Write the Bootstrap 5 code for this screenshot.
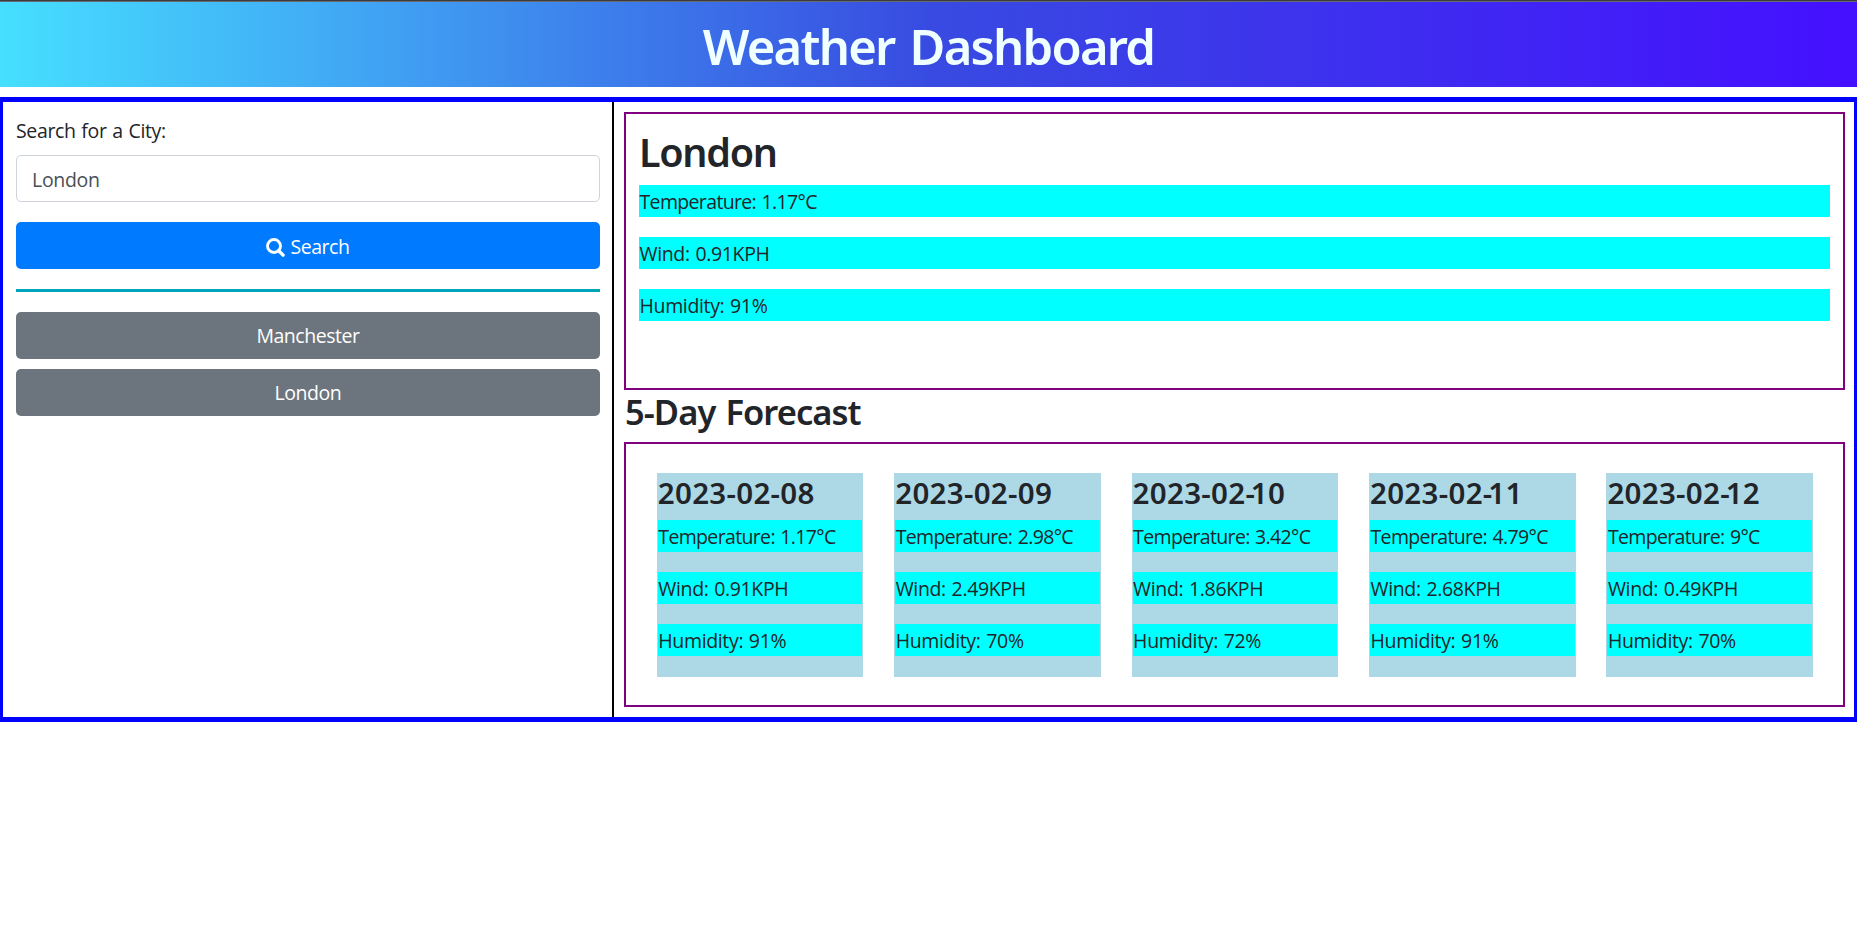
<!DOCTYPE html>
<html lang="en">
<head>
<meta charset="utf-8">
<meta name="viewport" content="width=device-width, initial-scale=1">
<title>Weather Dashboard</title>
<link rel="stylesheet" href="https://cdn.jsdelivr.net/npm/bootstrap@5.3.0/dist/css/bootstrap.min.css">
<style>
  body { font: 400 19.5px/32px "Open Sans", "Noto Sans", sans-serif; letter-spacing: -.35px; word-spacing: 1px; color: #212529; }
  h1, h2, h3, h4 { font-family: "Noto Sans", sans-serif; font-weight: 600; margin: 0; }
  .page-header { height: 87px; margin-bottom: 10px; border-top: 1px solid #3c3c3c; background: linear-gradient(90deg, #46dfff, #384be1 50%, #450fff); box-shadow: inset 0 1px #666a70; }
  .page-header h1 { font-size: 49px; line-height: 60px; letter-spacing: -1.75px; word-spacing: 4px; color: azure; padding-top: 15px; }
  .dashboard { height: 625px; border: solid blue; border-width: 5px 3px; }
  .sidebar { width: 611px; padding: 13px 12px 0 13px; border-right: 2px solid #000; }
  .sidebar label { margin-bottom: 8px; }
  .sidebar .form-control, .sidebar .btn { height: 47px; border-radius: 5px; font-size: 19.5px; line-height: 30px; padding: 8px 15px 7px; letter-spacing: -.45px; }
  .sidebar .form-control { color: #495057; border: 1px solid #ced4da; letter-spacing: -.3px; }
  .sidebar .btn { border: 0; color: #fff; padding-top: 9px; padding-bottom: 8px; }
  .sidebar .btn-search { background: #007bff; margin-top: 20px; padding-top: 10px; padding-bottom: 7px; }
  .btn-city { background: #6c757d; margin-bottom: 10px; }
  .btn-search svg { width: 19px; height: 19px; margin-right: 5px; }
  .divider { height: 3px; margin: 20px 0; background: #00a5bb; }
  .main { padding: 10px 9px 0 10px; }
  .panel { border: 2px solid purple; }
  .today { height: 278px; padding: 13px; }
  .today h2 { font-size: 39.5px; line-height: 50px; letter-spacing: -1.3px; margin-bottom: 8px; }
  .main h3 { font-size: 34.5px; line-height: 42px; height: 52px; letter-spacing: -.95px; word-spacing: 2px; padding: 1px 0 0 1px; }
  .forecast { height: 265px; padding: 29px 30px 0 30.8px; gap: 30.8px; }
  .day { flex: 1 1 0; height: 204px; padding: 1px; background: lightblue; }
  .day h4 { font-size: 29.5px; line-height: 36px; letter-spacing: .3px; height: 46px; padding-top: 1px; }
  .day h4 span { letter-spacing: -4px; }
  .reading { background: aqua; padding-left: .5px; margin-bottom: 20px; height: 32px; line-height: 34px; white-space: nowrap; }
  .temp { letter-spacing: -.65px; }
</style>
</head>
<body>
<header class="page-header text-center"><h1>Weather Dashboard</h1></header>
<div class="dashboard d-flex">
  <aside class="sidebar flex-shrink-0">
    <label class="d-block" for="city">Search for a City:</label>
    <input class="form-control" id="city" type="text" value="London">
    <button class="btn btn-search w-100 d-flex align-items-center justify-content-center" type="button"><svg viewBox="0 0 19 19" fill="none" stroke="#fff" aria-hidden="true"><circle cx="8" cy="8" r="6.5" stroke-width="2.9"/><path d="M12.7 12.7l4.4 4.4" stroke-width="3.4" stroke-linecap="round"/></svg>Search</button>
    <div class="divider"></div>
    <button class="btn btn-city w-100 d-block" type="button">Manchester</button>
    <button class="btn btn-city w-100 d-block" type="button">London</button>
  </aside>
  <main class="main flex-grow-1">
    <section class="panel today">
      <h2>London</h2>
      <div class="reading temp">Temperature: 1.17°C</div>
      <div class="reading">Wind: 0.91KPH</div>
      <div class="reading">Humidity: 91%</div>
    </section>
    <h3>5-Day Forecast</h3>
    <section class="panel forecast d-flex">
      <div class="day"><h4>2023-02-08</h4><div class="reading temp">Temperature: 1.17°C</div><div class="reading">Wind: 0.91KPH</div><div class="reading">Humidity: 91%</div></div>
      <div class="day"><h4>2023-02-09</h4><div class="reading temp">Temperature: 2.98°C</div><div class="reading">Wind: 2.49KPH</div><div class="reading">Humidity: 70%</div></div>
      <div class="day"><h4>2023-02<span>-</span>10</h4><div class="reading temp">Temperature: 3.42°C</div><div class="reading">Wind: 1.86KPH</div><div class="reading">Humidity: 72%</div></div>
      <div class="day"><h4>2023-02<span>-</span>11</h4><div class="reading temp">Temperature: 4.79°C</div><div class="reading">Wind: 2.68KPH</div><div class="reading">Humidity: 91%</div></div>
      <div class="day"><h4>2023-02<span>-</span>12</h4><div class="reading temp">Temperature: 9°C</div><div class="reading">Wind: 0.49KPH</div><div class="reading">Humidity: 70%</div></div>
    </section>
  </main>
</div>
<script src="https://cdn.jsdelivr.net/npm/bootstrap@5.3.0/dist/js/bootstrap.bundle.min.js"></script>
</body>
</html>
